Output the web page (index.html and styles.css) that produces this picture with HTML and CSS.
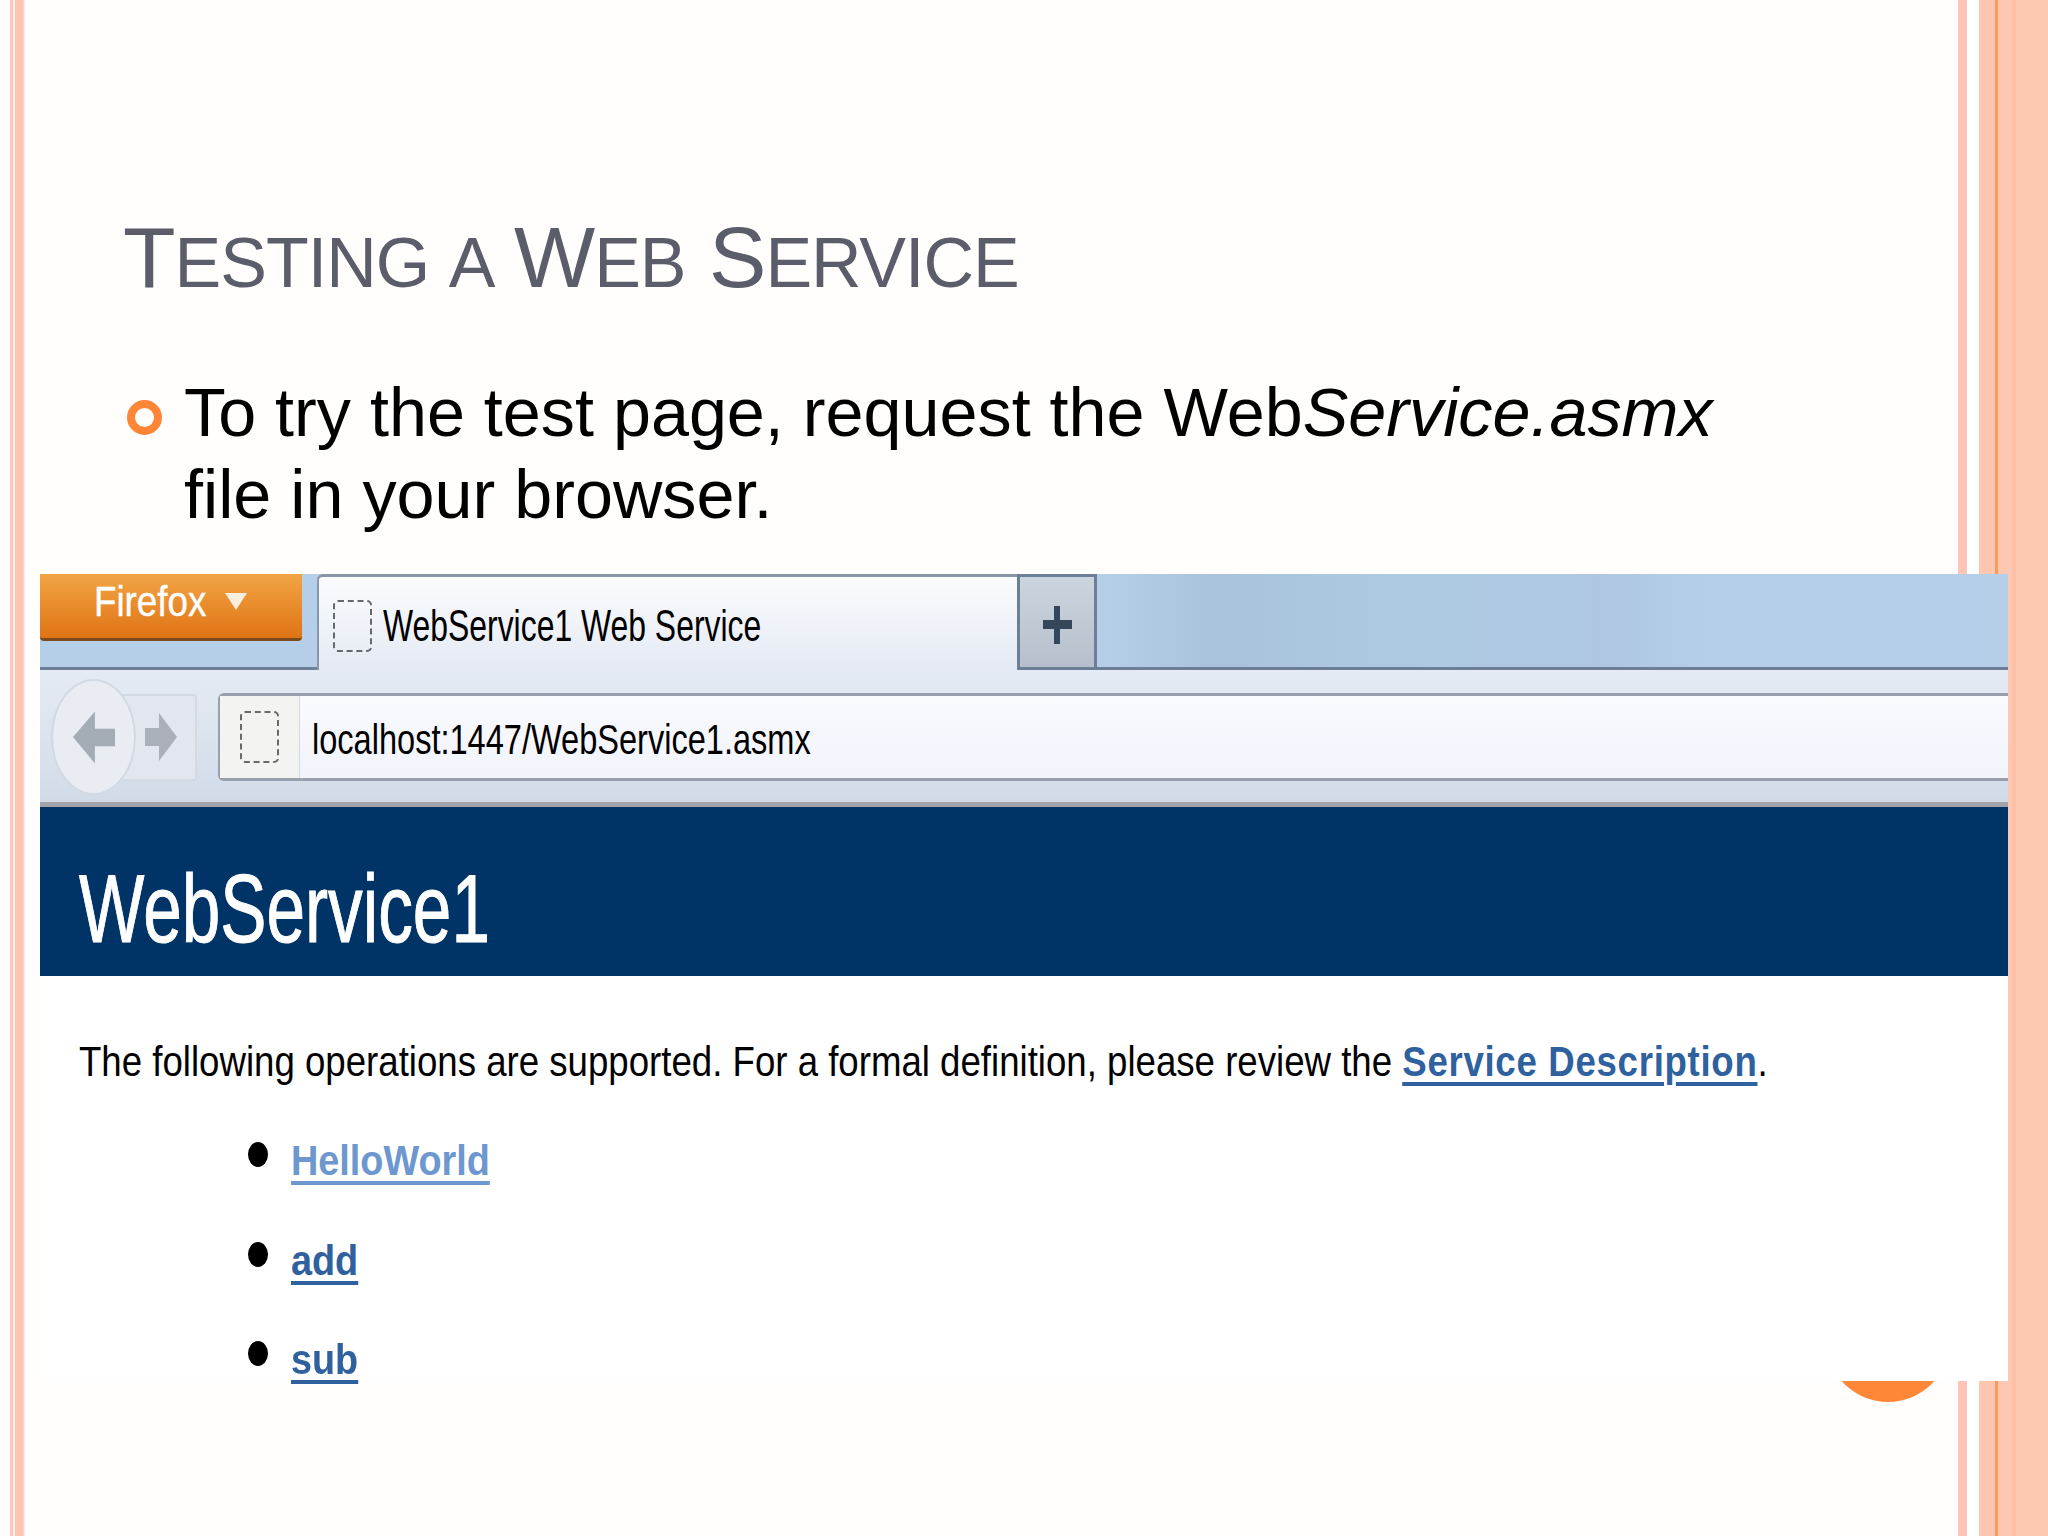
FILE: index.html
```html
<!DOCTYPE html>
<html lang="en">
<head>
    <meta charset="UTF-8">
    <title>Testing a Web Service</title>
    <link rel="stylesheet" href="styles.css">
</head>
<body>
    <div class="slide">
        <div class="slide-dot"></div>
        <h1 class="slide-title"><span class="cap">T</span>ESTING A <span class="cap">W</span>EB <span class="cap">S</span>ERVICE</h1>
        <div class="slide-point">
            <span class="ring"></span>
            <p>To try the test page, request the Web<em>Service.asmx</em> file in your browser.</p>
        </div>

        <div class="browser">
            <div class="tab-strip">
                <div class="firefox-button"><span class="firefox-label">Firefox</span><span class="caret"></span></div>
                <div class="tab">
                    <span class="favicon"></span>
                    <span class="tab-title">WebService1 Web Service</span>
                </div>
                <div class="new-tab"><span class="plus"></span></div>
            </div>
            <div class="nav-bar">
                <div class="nav-back">
                    <svg width="42" height="55" viewBox="0 0 46 57"><polygon points="24,0 0,28 24,57 24,38 46,38 46,19 24,19" fill="#a4acb6"/></svg>
                </div>
                <div class="nav-forward">
                    <svg width="32" height="48" viewBox="0 0 32 48"><polygon points="14,0 32,24 14,48 14,33 0,33 0,15 14,15" fill="#a9b0b9"/></svg>
                </div>
                <div class="url-bar">
                    <div class="identity"><span class="favicon"></span></div>
                    <span class="url-text">localhost:1447/WebService1.asmx</span>
                </div>
            </div>
            <div class="page-header"><span class="page-name">WebService1</span></div>
            <div class="page-body">
                <p class="intro">The following operations are supported. For a formal definition, please review the <a href="#">Service Description</a>.</p>
                <ul class="operations">
                    <li><a href="#" class="visited">HelloWorld</a></li>
                    <li><a href="#">add</a></li>
                    <li><a href="#">sub</a></li>
                </ul>
            </div>
        </div>
    </div>
</body>
</html>
```

FILE: styles.css
```css
html, body {
    margin: 0;
    padding: 0;
}
.slide {
    position: relative;
    width: 2048px;
    height: 1536px;
    overflow: hidden;
    font-family: "Liberation Sans", Arial, sans-serif;
    color: #000;
    background: linear-gradient(to right,
        #fffefd 0, #fffefd 10px,
        #fbc8bb 10px, #fbc8bb 13px,
        #fff2ec 13px, #fff2ec 15px,
        #ffc5b2 15px, #ffc5b2 23px,
        #fffefd 25px, #fffefd 1958px,
        #fec5b6 1958px, #fec5b6 1967px,
        #ffffff 1967px, #ffffff 1979px,
        #fec5b1 1979px, #fec5b1 1995px,
        #fc9a58 1995px, #fc9a58 1998px,
        #fec7b1 1998px, #fec7b1 2012px,
        #fcc0a6 2012px, #fcc0a6 2016px,
        #fcc9b3 2016px, #fcc9b3 2048px);
}
.slide-dot {
    position: absolute;
    left: 1826px;
    top: 1278px;
    width: 124px;
    height: 124px;
    border-radius: 50%;
    background-color: #fd8637;
}
.slide-title {
    margin: 0;
    padding: 207px 0 0 123px;
    font-size: 70px;
    font-weight: normal;
    line-height: 100px;
    letter-spacing: -1px;
    word-spacing: 5px;
    color: #5b5d6a;
    white-space: nowrap;
}
.slide-title .cap {
    font-size: 86px;
}
.slide-point {
    display: flex;
    margin: 58px 0 0 127px;
}
.ring {
    flex: none;
    box-sizing: border-box;
    width: 35px;
    height: 35px;
    margin-top: 29px;
    border: 8px solid #fd8637;
    border-radius: 50%;
}
.slide-point p {
    margin: 0 0 0 22px;
    width: 1560px;
    font-size: 68.3px;
    line-height: 82px;
}

/* browser screenshot, the text in it is squeezed like the stretched original */
.browser {
    position: relative;
    width: 1968px;
    height: 807px;
    margin: 39px 0 0 40px;
    background-color: #fff;
    filter: blur(0.6px);
}
.tab-strip {
    display: flex;
    box-sizing: border-box;
    height: 96px;
    border-bottom: 3px solid #6c7f96;
    background: linear-gradient(to right,
        #b5cfe9 0, #b5cfe9 1060px, #a9c3dc 1170px, #aec9e2 1400px,
        #aec6e2 1560px, #b5cfea 1680px, #b5cfe9 1968px);
}
.firefox-button {
    display: flex;
    align-items: center;
    box-sizing: border-box;
    width: 262px;
    height: 67px;
    padding: 0 0 8px 54px;
    border-bottom: 3px solid #7d4a1c;
    border-radius: 0 0 4px 4px;
    background: linear-gradient(#f2a545, #df7315);
    color: #fff;
    font-size: 42px;
}
.firefox-label {
    display: inline-block;
    -webkit-text-stroke: 0.4px #fff;
    transform: scaleX(0.875);
    transform-origin: left center;
}
.caret {
    width: 0;
    height: 0;
    margin: 0 0 2px 3px;
    border-left: 11px solid transparent;
    border-right: 11px solid transparent;
    border-top: 17px solid #fbeedd;
}
.tab {
    display: flex;
    align-items: center;
    box-sizing: border-box;
    width: 700px;
    height: 96px;
    margin-left: 15px;
    padding: 4px 0 0 14px;
    border: solid #8797a8;
    border-width: 3px 0 0 2px;
    border-radius: 6px 0 0 0;
    background: linear-gradient(#fbfcfe, #e4e9f3);
}
.favicon {
    display: block;
    flex: none;
    box-sizing: border-box;
    width: 39px;
    height: 52px;
    border: 2px dashed #66686c;
    border-radius: 5px;
}
.tab-title {
    display: inline-block;
    margin-left: 11px;
    font-size: 44px;
    white-space: nowrap;
    transform: scaleX(0.725);
    transform-origin: left center;
}
.new-tab {
    display: flex;
    align-items: center;
    justify-content: center;
    box-sizing: border-box;
    width: 80px;
    height: 96px;
    padding-top: 5px;
    border: 3px solid #6c7f96;
    background: linear-gradient(#cbd5df, #b6c0cc);
}
.plus {
    width: 29px;
    height: 38px;
    background:
        linear-gradient(#33465a, #33465a) center / 29px 9px no-repeat,
        linear-gradient(#33465a, #33465a) center / 6px 38px no-repeat;
}
.nav-bar {
    display: flex;
    align-items: center;
    box-sizing: border-box;
    height: 137px;
    padding: 2px 0 0 11px;
    border-bottom: 5px solid #a0a4aa;
    background: linear-gradient(#e5ebf4, #d1dbe8);
}
.nav-back {
    position: relative;
    z-index: 1;
    display: flex;
    align-items: center;
    justify-content: center;
    flex: none;
    box-sizing: border-box;
    width: 85px;
    height: 116px;
    border: 2px solid #d3d9e2;
    border-radius: 50%;
    background-color: #e9edf3;
}
.nav-forward {
    display: flex;
    align-items: center;
    justify-content: flex-end;
    flex: none;
    box-sizing: border-box;
    width: 78px;
    height: 87px;
    margin-left: -17px;
    padding-right: 18px;
    border: 2px solid #d3dae4;
    border-radius: 0 4px 4px 0;
    background-color: #e2e7ef;
}
.url-bar {
    display: flex;
    align-items: center;
    flex: 1;
    box-sizing: border-box;
    height: 88px;
    margin-left: 21px;
    border: solid #98a0ad;
    border-width: 3px 0 3px 2px;
    border-radius: 6px 0 0 6px;
    background: linear-gradient(#f9fafe, #f2f4fc);
}
.identity {
    display: flex;
    align-items: center;
    justify-content: center;
    box-sizing: border-box;
    width: 80px;
    height: 100%;
    border-right: 1px solid #d5d8dd;
    background-color: #f3f3f1;
}
.url-text {
    display: inline-block;
    margin: 6px 0 0 12px;
    font-size: 42px;
    white-space: nowrap;
    transform: scaleX(0.775);
    transform-origin: left center;
}
.page-header {
    box-sizing: border-box;
    height: 169px;
    padding: 47px 0 0 39px;
    background-color: #003366;
    color: #fff;
    font-size: 96px;
    line-height: 110px;
}
.page-name {
    display: inline-block;
    -webkit-text-stroke: 1px #fff;
    transform: scaleX(0.722);
    transform-origin: left center;
}
.page-body {
    padding: 60px 0 0 39px;
    font-size: 42px;
    line-height: 52px;
}
.page-body a {
    color: #2f619f;
    font-weight: bold;
    text-decoration-thickness: 4px;
    text-underline-offset: 6px;
}
.page-body a.visited {
    color: #6c97cf;
}
.intro {
    margin: 0;
    white-space: nowrap;
    transform: scaleX(0.872);
    transform-origin: left center;
}
.intro a {
    letter-spacing: 0.8px;
}
.operations {
    margin: 0;
    padding: 0;
    list-style: none;
}
.operations li {
    display: flex;
    align-items: flex-start;
    height: 99.5px;
    padding-left: 169px;
}
.operations li:first-child {
    margin-top: 47px;
}
.operations li::before {
    content: "";
    flex: none;
    width: 20px;
    height: 25px;
    margin: 7px 23px 0 0;
    border-radius: 50%;
    background-color: #000;
}
.operations a {
    display: inline-block;
    transform: scaleX(0.9);
    transform-origin: left center;
}
```
